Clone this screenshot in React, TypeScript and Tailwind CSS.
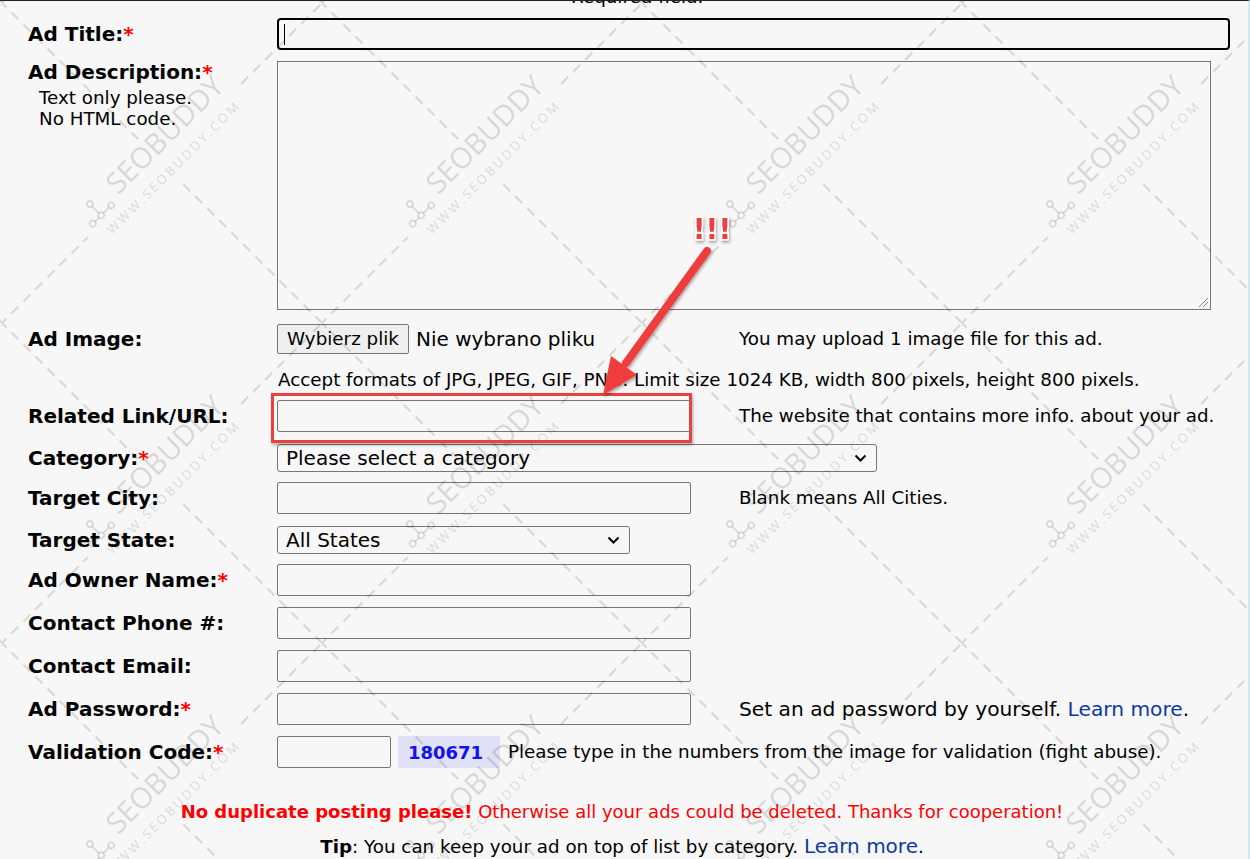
import React from "react";

const labelCls = "font-bold text-[20px] leading-[23px] text-black";

function Req() {
  return <span className="text-[#ff0000]">*</span>;
}

function Box({ className }: { className: string }) {
  return <div className={`border border-[#767676] rounded-[2px] ${className}`} />;
}

function Select({ value, className }: { value: string; className: string }) {
  return (
    <div className={`flex items-center justify-between border border-[#767676] rounded-[3px] pl-[8px] pr-[9px] ${className}`}>
      <span className="text-[20px] leading-none">{value}</span>
      <svg width="13" height="8" viewBox="0 0 13 8">
        <path d="M1.5 1.5 L6.5 6.5 L11.5 1.5" fill="none" stroke="#000" strokeWidth="2" />
      </svg>
    </div>
  );
}

// watermark tile, drawn over the whole page
function Watermark() {
  return (
    <svg className="absolute inset-0 pointer-events-none" width="1250" height="859">
      <defs>
        <pattern id="wm" x="2" y="2" width="320" height="320" patternUnits="userSpaceOnUse">
          <g transform="translate(160,160) rotate(-45)" stroke="rgba(0,0,0,0.13)" strokeWidth="2" strokeDasharray="10 7" fill="none">
            <line x1="-230" y1="0" x2="-105" y2="0" />
            <line x1="112" y1="0" x2="230" y2="0" />
            <line x1="0" y1="-230" x2="0" y2="-34" />
            <line x1="0" y1="30" x2="0" y2="230" />
          </g>
          <g transform="translate(160,160) rotate(-45)" fill="rgba(0,0,0,0.13)">
            <text x="-54" y="-8" fontSize="29" fontFamily="'Open Sans', sans-serif" textLength="152" lengthAdjust="spacingAndGlyphs">SEOBUDDY</text>
            <text x="-86" y="16" fontSize="13" fontFamily="'Open Sans', sans-serif" textLength="180" lengthAdjust="spacing">WWW.SEOBUDDY.COM</text>
            <g stroke="rgba(0,0,0,0.13)" strokeWidth="1.6" fill="none">
              <circle cx="-80" cy="-22" r="3" />
              <circle cx="-80" cy="-6" r="3" />
              <circle cx="-66" cy="-6" r="3" />
              <circle cx="-92" cy="-6" r="3" />
              <line x1="-80" y1="-19" x2="-80" y2="-9" />
              <line x1="-77" y1="-6" x2="-69" y2="-6" />
              <line x1="-89" y1="-6" x2="-83" y2="-6" />
            </g>
          </g>
        </pattern>
      </defs>
      <rect width="1250" height="859" fill="url(#wm)" />
    </svg>
  );
}

function Arrow() {
  return (
    <svg className="absolute inset-0 pointer-events-none" width="1250" height="859">
      <defs>
        <filter id="sh" x="-20%" y="-20%" width="140%" height="140%">
          <feDropShadow dx="1" dy="2" stdDeviation="1.5" floodColor="#000" floodOpacity="0.35" />
        </filter>
      </defs>
      <g filter="url(#sh)">
        <line x1="707" y1="250" x2="626" y2="362" stroke="#ef3e3e" strokeWidth="8" strokeLinecap="round" />
        <polygon points="603,394 637,374 611,355" fill="#ef3e3e" />
        <text x="712" y="238" textAnchor="middle" fontSize="28" fontWeight="bold" fontFamily="'Liberation Sans Narrow', 'DejaVu Sans', sans-serif" fill="#ef3e3e" stroke="#fff" strokeWidth="3" paintOrder="stroke">!!!</text>
      </g>
    </svg>
  );
}

export default function App() {
  return (
    <div className="relative w-[1250px] h-[859px] overflow-hidden bg-[#f7f7f7] border-t border-[#222] border-r-2 border-r-[#cfe9ec] font-['DejaVu_Sans',Verdana,sans-serif] text-[18.3px] text-black">
      <div className="absolute left-[571px] top-[-13px] leading-[18px]">Required field.</div>

      <div className="pl-[28px] pt-[17px]">
        {/* Ad Title */}
        <div className="grid grid-cols-[249px_1fr] items-center h-[32px]">
          <div className={labelCls}>Ad Title:<Req /></div>
          <div className="w-[953px] h-[32px] border-2 border-black rounded-[4px] flex items-center pl-[5px]">
            <div className="w-[1px] h-[21px] bg-black" />
          </div>
        </div>

        {/* Ad Description */}
        <div className="grid grid-cols-[249px_1fr] mt-[11px] h-[249px]">
          <div>
            <div className={labelCls}>Ad Description:<Req /></div>
            <div className="pl-[11px] mt-[3px] leading-[21px]">
              <div>Text only please.</div>
              <div>No HTML code.</div>
            </div>
          </div>
          <div className="relative w-[934px] h-[249px] border border-[#767676]">
            <svg className="absolute right-[1px] bottom-[1px]" width="11" height="11" viewBox="0 0 11 11">
              <line x1="1" y1="10" x2="10" y2="1" stroke="#888" strokeWidth="1" />
              <line x1="5" y1="10" x2="10" y2="5" stroke="#888" strokeWidth="1" />
            </svg>
          </div>
        </div>

        {/* Ad Image */}
        <div className="grid grid-cols-[249px_462px_1fr] items-center mt-[14px] h-[30px]">
          <div className={labelCls}>Ad Image:</div>
          <div className="flex items-center">
            <div className="w-[132px] h-[30px] bg-[#efefef] border border-[#767676] rounded-[2px] flex items-center justify-center">Wybierz plik</div>
            <span className="ml-[7px] text-[20px]">Nie wybrano pliku</span>
          </div>
          <div>You may upload 1 image file for this ad.</div>
        </div>

        {/* formats */}
        <div className="grid grid-cols-[249px_1fr] items-center mt-[12px] h-[26px]">
          <div />
          <div className="pl-[1px]">Accept formats of JPG, JPEG, GIF, PNG. Limit size 1024 KB, width 800 pixels, height 800 pixels.</div>
        </div>

        {/* Related Link */}
        <div className="grid grid-cols-[249px_462px_1fr] items-center mt-[8px] h-[32px]">
          <div className={labelCls}>Related Link/URL:</div>
          <Box className="w-[414px] h-[32px]" />
          <div>The website that contains more info. about your ad.</div>
        </div>

        {/* Category */}
        <div className="grid grid-cols-[249px_1fr] items-center mt-[12px] h-[28px]">
          <div className={labelCls}>Category:<Req /></div>
          <Select value="Please select a category" className="w-[600px] h-[28px]" />
        </div>

        {/* Target City */}
        <div className="grid grid-cols-[249px_462px_1fr] items-center mt-[10px] h-[32px]">
          <div className={labelCls}>Target City:</div>
          <Box className="w-[414px] h-[32px]" />
          <div>Blank means All Cities.</div>
        </div>

        {/* Target State */}
        <div className="grid grid-cols-[249px_1fr] items-center mt-[12px] h-[28px]">
          <div className={labelCls}>Target State:</div>
          <Select value="All States" className="w-[353px] h-[28px]" />
        </div>

        {/* Owner */}
        <div className="grid grid-cols-[249px_1fr] items-center mt-[10px] h-[32px]">
          <div className={labelCls}>Ad Owner Name:<Req /></div>
          <Box className="w-[414px] h-[32px]" />
        </div>

        <div className="grid grid-cols-[249px_1fr] items-center mt-[11px] h-[32px]">
          <div className={labelCls}>Contact Phone #:</div>
          <Box className="w-[414px] h-[32px]" />
        </div>

        <div className="grid grid-cols-[249px_1fr] items-center mt-[11px] h-[32px]">
          <div className={labelCls}>Contact Email:</div>
          <Box className="w-[414px] h-[32px]" />
        </div>

        {/* Password */}
        <div className="grid grid-cols-[249px_462px_1fr] items-center mt-[11px] h-[32px]">
          <div className={labelCls}>Ad Password:<Req /></div>
          <Box className="w-[414px] h-[32px]" />
          <div className="text-[20.2px]">
            Set an ad password by yourself. <span className="text-[#0b3a9e]">Learn more</span>.
          </div>
        </div>

        {/* Validation */}
        <div className="grid grid-cols-[249px_1fr] items-center mt-[11px] h-[32px]">
          <div className={labelCls}>Validation Code:<Req /></div>
          <div className="flex items-center">
            <Box className="w-[114px] h-[32px]" />
            <div className="ml-[7px] w-[102px] h-[32px] bg-[#e0e0f6] flex items-center pl-[10px]">
              <span className="font-bold text-[18px] text-[#1212ee]">180671</span>
            </div>
            <span className="ml-[8px]">Please type in the numbers from the image for validation (fight abuse).</span>
          </div>
        </div>
      </div>

      <div className="w-[1244px] text-center mt-[31px] h-[26px] leading-[26px] text-[18px] text-[#ff0000]">
        <span className="font-bold">No duplicate posting please!</span> Otherwise all your ads could be deleted. Thanks for cooperation!
      </div>
      <div className="w-[1244px] text-center mt-[8px] h-[26px] leading-[26px]">
        <span className="font-bold">Tip</span>: You can keep your ad on top of list by category. <span className="text-[#0b3a9e] text-[20px]">Learn more</span>.
      </div>

      <Watermark />

      <div className="absolute left-[271px] top-[392px] w-[421px] h-[50px] border-[3px] border-[#e8413f] shadow-[1px_2px_3px_rgba(0,0,0,0.3)] pointer-events-none" />
      <Arrow />
    </div>
  );
}
